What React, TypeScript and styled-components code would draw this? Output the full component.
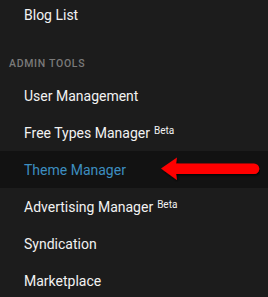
import styled, { createGlobalStyle } from "styled-components";

const Global = createGlobalStyle`
    html, body {
        margin: 0;
        padding: 0;
        background: #1c1c1c;
    }
    body {
        font-family: Roboto, "Liberation Sans", sans-serif;
        overflow: hidden;
    }
`

const items = [
    { label: "User Management" },
    { label: "Free Types Manager", beta: true },
    { label: "Theme Manager", active: true },
    { label: "Advertising Manager", beta: true },
    { label: "Syndication" },
    { label: "Marketplace" },
]

export default function App() {
    return (
        <>
            <Global />
            <Sidebar>
                <Item>Blog List</Item>
                <SectionTitle>Admin Tools</SectionTitle>
                {items.map((it) => (
                    <Item key={it.label} $active={it.active}>
                        {it.label}
                        {it.beta && <Beta>Beta</Beta>}
                        {it.active && (
                            <Arrow viewBox="0 0 100 26" width="100" height="26">
                                <defs>
                                    <filter id="sh" x="-10%" y="-40%" width="120%" height="180%">
                                        <feDropShadow dx="1" dy="1.5" stdDeviation="1" floodColor="#000" floodOpacity="0.8" />
                                    </filter>
                                </defs>
                                <path
                                    d="M1 12.5 L17 1.5 L16 7.5 L94 7.5 A5.25 5.25 0 0 1 94 18 L16 18 L17 24 Z"
                                    fill="#ff0000"
                                    filter="url(#sh)"
                                />
                            </Arrow>
                        )}
                    </Item>
                ))}
            </Sidebar>
        </>
    )
}

const Sidebar = styled.nav`
    width: 268px;
    height: 297px;
    background: #1c1c1c;
    display: flex;
    flex-direction: column;
    margin-top: -4px;
`

const Item = styled.div<{ $active?: boolean }>`
    position: relative;
    flex: 0 0 37px;
    display: flex;
    align-items: center;
    padding-left: 24px;
    font-size: 14px;
    color: ${(p) => (p.$active ? "#3d8ec0" : "#f2f2f2")};
    background: ${(p) => (p.$active ? "#121212" : "transparent")};
`

const Beta = styled.sup`
    font-size: 10px;
    margin-left: 4px;
    position: relative;
    top: -2px;
`

const SectionTitle = styled.div`
    padding: 24px 0 7px 9px;
    font-size: 10.5px;
    font-weight: 500;
    letter-spacing: 0.7px;
    text-transform: uppercase;
    color: #7a7a7a;
`

const Arrow = styled.svg`
    position: absolute;
    left: 160px;
    top: 5px;
`
